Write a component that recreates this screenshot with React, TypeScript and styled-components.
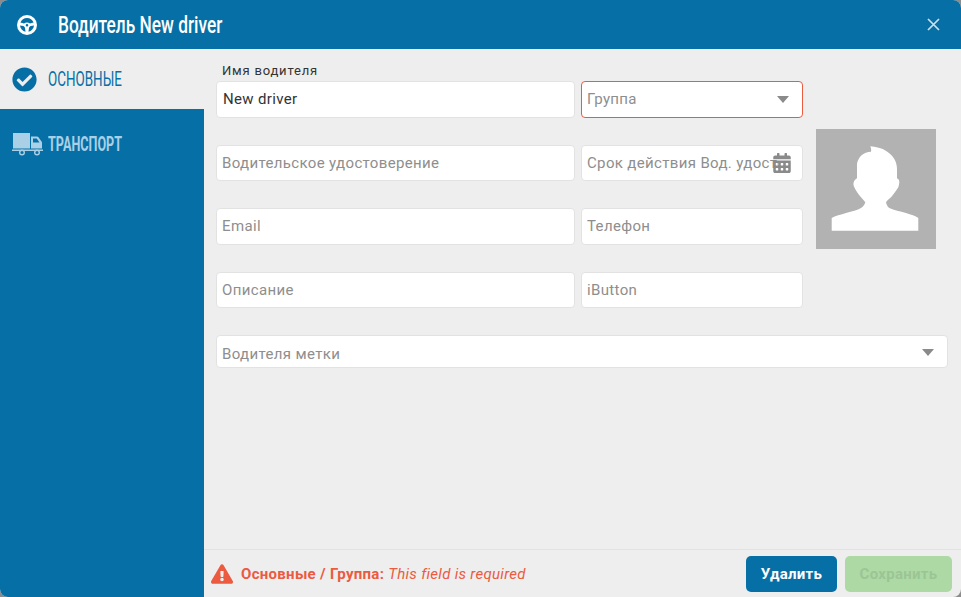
import React from 'react'
import styled, { createGlobalStyle } from 'styled-components'
import { FaCheckCircle, FaCalendarAlt, FaExclamationTriangle } from 'react-icons/fa'

const GlobalStyle = createGlobalStyle`
  html, body {
    margin: 0;
    padding: 0;
    height: 100%;
    background: #8c8c8c;
    font-family: Roboto, "Liberation Sans", sans-serif;
  }
  * { box-sizing: border-box; }
`

const Dialog = styled.div`
  width: 961px;
  height: 597px;
  display: flex;
  flex-direction: column;
  background: #eeeeee;
  border-radius: 8px;
  overflow: hidden;
`

const Header = styled.header`
  height: 49px;
  flex: none;
  display: flex;
  align-items: center;
  padding: 0 21px 0 17px;
  background: #0670a6;
  color: #fff;
`

// the original uses a condensed display face, Roboto squeezed is the nearest one installed
const Title = styled.h1`
  flex: 1;
  margin: 0 0 0 21px;
  font-size: 24px;
  font-weight: 500;
  line-height: 28px;
  color: #fff;
  white-space: nowrap;
  transform: scaleX(0.72);
  transform-origin: left center;
`

const CloseButton = styled.button`
  border: 0;
  padding: 0;
  display: flex;
  background: none;
  color: #c5e3f3;
`

const Body = styled.div`
  flex: 1;
  min-height: 0;
  display: flex;
`

const Sidebar = styled.nav`
  width: 204px;
  flex: none;
  background: #0670a6;
`

const Tab = styled.div<{ $active?: boolean }>`
  height: ${p => (p.$active ? 60 : 70)}px;
  display: flex;
  align-items: center;
  gap: ${p => (p.$active ? 11 : 5)}px;
  padding-left: ${p => (p.$active ? 12 : 11)}px;
  background: ${p => (p.$active ? '#eeeeee' : 'transparent')};
  color: ${p => (p.$active ? '#0670a6' : '#a9d0e6')};
`

const TabLabel = styled.span<{ $bold?: boolean }>`
  font-size: 20px;
  font-weight: ${p => (p.$bold ? 700 : 400)};
  white-space: nowrap;
  transform: scaleX(${p => (p.$bold ? 0.63 : 0.67)});
  transform-origin: left center;
`

const Main = styled.main`
  flex: 1;
  min-width: 0;
  display: flex;
  flex-direction: column;
`

const Form = styled.div`
  flex: 1;
  padding: 32px 13px 0 12px;
`

const TopArea = styled.div`
  display: flex;
  gap: 13px;
`

const Fields = styled.div`
  width: 587px;
  display: grid;
  grid-template-columns: 359px 222px;
  grid-auto-rows: 36.5px;
  column-gap: 6px;
  row-gap: 27px;
`

const Field = styled.div`
  position: relative;
`

const FieldLabel = styled.label`
  position: absolute;
  left: 6px;
  top: -18px;
  font-size: 13px;
  letter-spacing: 0.8px;
  line-height: 15px;
  color: #333;
`

const Input = styled.input<{ $error?: boolean; $endPad?: number; $topPad?: number }>`
  width: 100%;
  height: 100%;
  padding: ${p => p.$topPad ?? 0}px ${p => p.$endPad ?? 5}px 0 5px;
  border: 1px solid ${p => (p.$error ? '#ec5a3f' : '#e2e2e2')};
  border-radius: 4px;
  background: #fff;
  outline: 0;
  font-family: Roboto, "Liberation Sans", sans-serif;
  font-size: 15px;
  letter-spacing: 0.35px;
  color: #333;

  &:not(:placeholder-shown) {
    padding-left: 6px;
  }

  &::placeholder {
    color: #8e8e8e;
    opacity: 1;
  }
`

const FieldIcon = styled.span`
  position: absolute;
  top: 50%;
  right: 11px;
  transform: translateY(-50%);
  display: flex;
  color: #8a8a8a;
`

const Caret = styled.span`
  position: absolute;
  top: 50%;
  right: 14px;
  margin-top: -3px;
  border-style: solid;
  border-width: 7px 6.5px 0;
  border-color: #8a8a8a transparent transparent;
`

const AvatarBox = styled.div`
  width: 120px;
  height: 120px;
  margin-top: 48px;
  background: #b2b2b2;
  flex: none;
`

const TagsField = styled.div`
  position: relative;
  height: 33px;
  margin-top: 27px;
`

const Footer = styled.footer`
  height: 48px;
  flex: none;
  display: flex;
  align-items: center;
  padding: 0 9px 0 7px;
  border-top: 1px solid #e2e2e2;
`

const ErrorText = styled.div`
  flex: 1;
  display: flex;
  align-items: center;
  gap: 8px;
  font-size: 15px;
  letter-spacing: 0.3px;
  color: #ec5a3f;
`

const ErrorPath = styled.b`
  font-weight: 700;
`

const ErrorMessage = styled.i`
  font-style: italic;
`

const Button = styled.button<{ $variant: 'primary' | 'disabled'; $width: number }>`
  width: ${p => p.$width}px;
  height: 36px;
  margin-left: 8px;
  border: 0;
  border-radius: 5px;
  background: ${p => (p.$variant === 'primary' ? '#0670a6' : '#acd9a4')};
  color: ${p => (p.$variant === 'primary' ? '#fff' : '#9cc596')};
  font-family: Roboto, "Liberation Sans", sans-serif;
  font-size: 15px;
  font-weight: 700;
  letter-spacing: 0.3px;
`

function SteeringWheel() {
  return (
    <svg width="20" height="20" viewBox="0 0 20 20">
      <path
        fill="#fff"
        fillRule="evenodd"
        d="M10 0a10 10 0 1 0 0 20a10 10 0 0 0 0-20zM10 3c3 0 5.600 1.900 6.600 4.600L13 8.400c-1-.6-2-.9-3-.9s-2 .3-3 .9L3.400 7.600C4.400 4.900 7 3 10 3zM3 10.500l3.500.5c.9.4 1.500 1.500 1.600 2.500l.4 3.300C5.500 16.200 3.300 13.600 3 10.500zM11.500 16.800l.4-3.300c.1-1 .7-2.100 1.600-2.500l3.500-.5c-.3 3.100-2.500 5.700-5.500 6.300zM10 9a1.300 1.300 0 1 1 0 2.600A1.300 1.300 0 0 1 10 9z"
      />
    </svg>
  )
}

function CloseIcon() {
  return (
    <svg width="13" height="13" viewBox="0 0 13 13">
      <path d="M1 1l11 11M12 1L1 12" stroke="currentColor" strokeWidth="1.700" fill="none" />
    </svg>
  )
}

function TruckIcon() {
  return (
    <svg width="32" height="24" viewBox="0 0 32 24">
      <path fill="currentColor" d="M2 1h17v15.500H2z" />
      <path
        fill="currentColor"
        fillRule="evenodd"
        d="M20 4.500h6c.6 0 1 .2 1.300.6l3.200 4.400c.3.4.5.8.5 1.300v5.700H20zM22 6.500v4h6.500l-2.800-4z"
      />
      <path fill="currentColor" d="M1 17.500h31V19H1z" />
      <circle cx="11" cy="20.500" r="2.300" fill="#0670a6" stroke="currentColor" strokeWidth="1.400" />
      <circle cx="26" cy="20.500" r="2.300" fill="#0670a6" stroke="currentColor" strokeWidth="1.400" />
    </svg>
  )
}

function AvatarIcon() {
  return (
    <svg width="120" height="120" viewBox="0 0 120 120">
      <path
        fill="#fff"
        d="M54.300 17.300C60 18 64 19 66.700 20C73 23 76.500 27 78.300 30C80.300 33.500 81 37 81 40V49.300C82.500 50 83.500 51.500 83.300 53.300C83.200 55 82.800 57 82.300 58.300C80 62 77.500 65.500 75 68.300C73 70 71 71.500 70 73.300C70.500 75.500 71.500 78 73.300 79C78 81 84 82.500 90 84C95 85.500 99.500 87 102.300 89V101.700H15.700V89C19 87 25 85.500 30 84C36 82.500 41.500 81 45 79C47.500 77.500 48.800 75.500 49.300 73.300C48 71.500 46.500 70 45 68.300C42.500 65.500 40 62 38.300 58.300C37.500 56.500 37.200 55 37.700 53.300C38.200 51.500 39.500 50.300 41 49.300V35C41.500 31.500 43 29 45 26.700C48 24 51.500 23 55 22.700C55.500 21 55 19 54.300 17.300Z"
      />
    </svg>
  )
}

export default function App() {
  return (
    <>
      <GlobalStyle />
      <Dialog>
        <Header>
          <SteeringWheel />
          <Title>Водитель New driver</Title>
          <CloseButton aria-label="Закрыть">
            <CloseIcon />
          </CloseButton>
        </Header>
        <Body>
          <Sidebar>
            <Tab $active>
              <FaCheckCircle size={25} />
              <TabLabel>ОСНОВНЫЕ</TabLabel>
            </Tab>
            <Tab>
              <TruckIcon />
              <TabLabel $bold>ТРАНСПОРТ</TabLabel>
            </Tab>
          </Sidebar>
          <Main>
            <Form>
              <TopArea>
                <Fields>
                  <Field>
                    <FieldLabel>Имя водителя</FieldLabel>
                    <Input defaultValue="New driver" placeholder=" " />
                  </Field>
                  <Field>
                    <Input $error placeholder="Группа" />
                    <Caret />
                  </Field>
                  <Field>
                    <Input placeholder="Водительское удостоверение" />
                  </Field>
                  <Field>
                    <Input $endPad={24} placeholder="Срок действия Вод. удостоверения" />
                    <FieldIcon>
                      <FaCalendarAlt size={20} />
                    </FieldIcon>
                  </Field>
                  <Field>
                    <Input placeholder="Email" />
                  </Field>
                  <Field>
                    <Input placeholder="Телефон" />
                  </Field>
                  <Field>
                    <Input placeholder="Описание" />
                  </Field>
                  <Field>
                    <Input placeholder="iButton" />
                  </Field>
                </Fields>
                <AvatarBox>
                  <AvatarIcon />
                </AvatarBox>
              </TopArea>
              <TagsField>
                <Input $topPad={5} placeholder="Водителя метки" />
                <Caret />
              </TagsField>
            </Form>
            <Footer>
              <ErrorText>
                <FaExclamationTriangle size={22} />
                <span>
                  <ErrorPath>Основные / Группа:</ErrorPath> <ErrorMessage>This field is required</ErrorMessage>
                </span>
              </ErrorText>
              <Button $variant="primary" $width={91}>Удалить</Button>
              <Button $variant="disabled" $width={107}>Сохранить</Button>
            </Footer>
          </Main>
        </Body>
      </Dialog>
    </>
  )
}
